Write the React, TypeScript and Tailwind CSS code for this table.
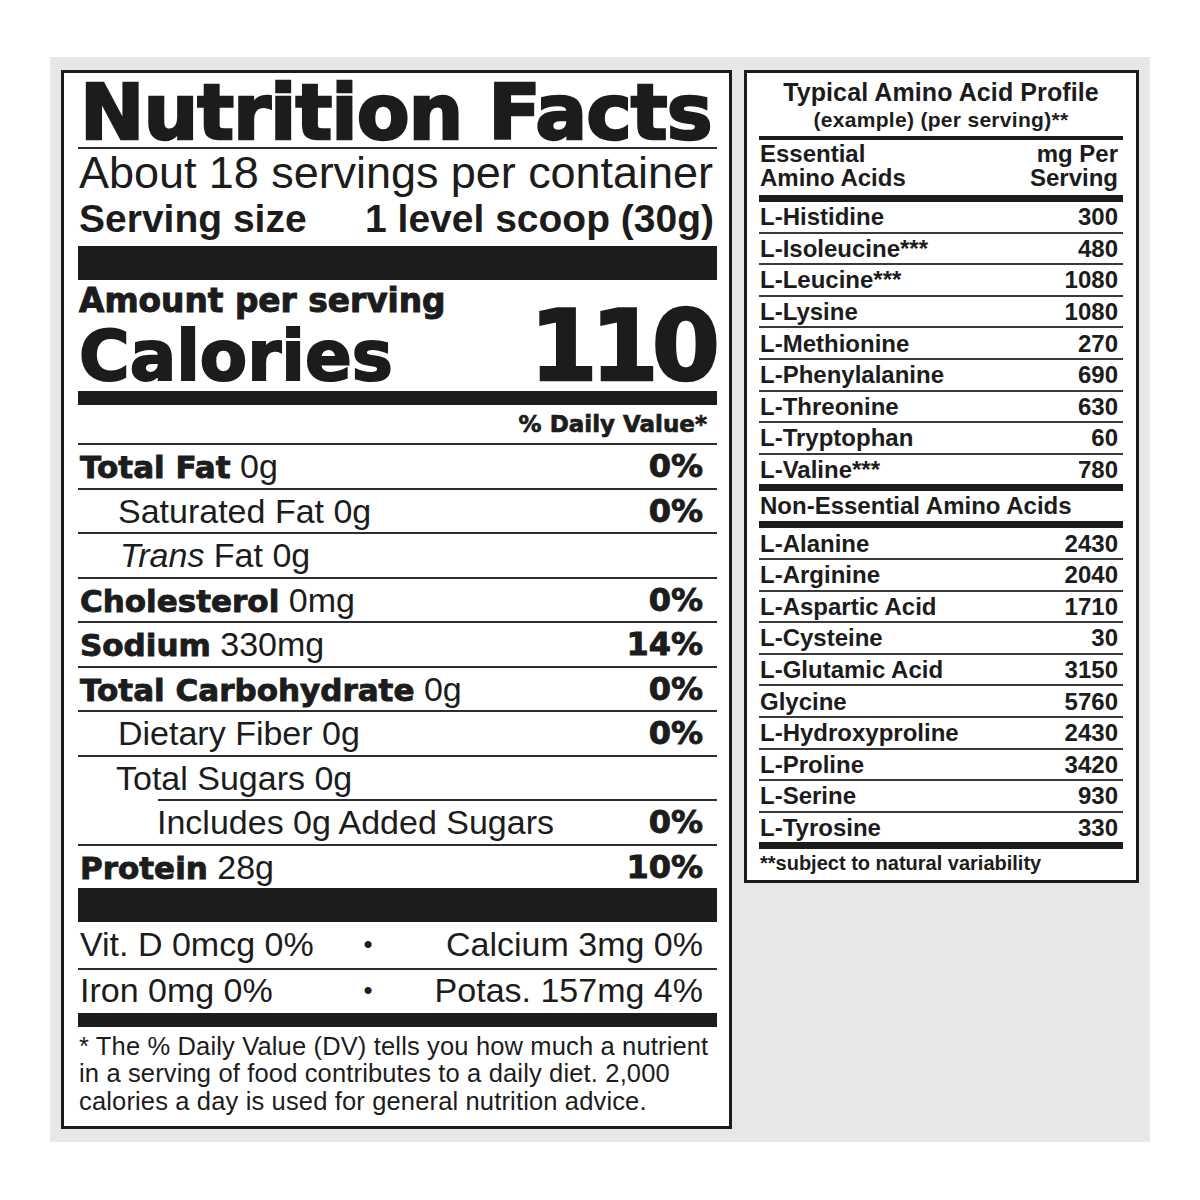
import React from "react";

const HEAVY = "font-['DejaVu_Sans',sans-serif] font-bold";
const REG = "font-['Liberation_Sans',Arial,sans-serif]";

type Nut = {
  bold?: string;
  reg: React.ReactNode;
  pct?: string;
  indent: string;
  line: string;
};

const nutrients: Nut[] = [
  { bold: "Total Fat", reg: " 0g", pct: "0%", indent: "pl-[2px]", line: "h-[2px] bg-[#2e2e2e]" },
  { reg: "Saturated Fat 0g", pct: "0%", indent: "pl-[40px]", line: "h-[2px] bg-[#2e2e2e]" },
  { reg: (<><i>Trans</i> Fat 0g</>), indent: "pl-[42px]", line: "h-[2px] bg-[#2e2e2e]" },
  { bold: "Cholesterol", reg: " 0mg", pct: "0%", indent: "pl-[2px]", line: "h-[2px] bg-[#2e2e2e]" },
  { bold: "Sodium", reg: " 330mg", pct: "14%", indent: "pl-[2px]", line: "h-[2px] bg-[#2e2e2e]" },
  { bold: "Total Carbohydrate", reg: " 0g", pct: "0%", indent: "pl-[2px]", line: "h-[2px] bg-[#2e2e2e]" },
  { reg: "Dietary Fiber 0g", pct: "0%", indent: "pl-[40px]", line: "h-[2px] bg-[#2e2e2e]" },
  { reg: "Total Sugars 0g", indent: "pl-[38px]", line: "h-[2px] bg-[#2e2e2e]" },
  { reg: "Includes 0g Added Sugars", pct: "0%", indent: "pl-[79px]", line: "h-[2px] bg-[#2e2e2e] ml-[80px]" },
  { bold: "Protein", reg: " 28g", pct: "10%", indent: "pl-[2px]", line: "h-[2px] bg-[#2e2e2e]" },
];

const essential: [string, string][] = [
  ["L-Histidine", "300"],
  ["L-Isoleucine***", "480"],
  ["L-Leucine***", "1080"],
  ["L-Lysine", "1080"],
  ["L-Methionine", "270"],
  ["L-Phenylalanine", "690"],
  ["L-Threonine", "630"],
  ["L-Tryptophan", "60"],
  ["L-Valine***", "780"],
];

const nonEssential: [string, string][] = [
  ["L-Alanine", "2430"],
  ["L-Arginine", "2040"],
  ["L-Aspartic Acid", "1710"],
  ["L-Cysteine", "30"],
  ["L-Glutamic Acid", "3150"],
  ["Glycine", "5760"],
  ["L-Hydroxyproline", "2430"],
  ["L-Proline", "3420"],
  ["L-Serine", "930"],
  ["L-Tyrosine", "330"],
];

function NutritionPanel() {
  return (
    <div className="w-[671px] h-[1059px] shrink-0 border-[3px] border-[#1c1c1c] bg-white pl-[14px] pr-[12px] text-[#1c1c1c]">
      {/* Title */}
      <div className="pt-[5px]">
        <div className={`${HEAVY} text-[77px] leading-[69px] tracking-[-1px] whitespace-nowrap pl-[2px] [-webkit-text-stroke:2.5px_#1c1c1c]`}>
          Nutrition Facts
        </div>
      </div>
      <div className="h-[2px] bg-[#2e2e2e]" />
      <div className={`${REG} mt-[1px] text-[45px] leading-[45px] tracking-[-0.05px] whitespace-nowrap pl-[1px]`}>
        About 18 servings per container
      </div>
      <div className={`${REG} font-bold mt-[4px] text-[39px] leading-[39px] flex justify-between whitespace-nowrap pl-[1px] pr-[3px]`}>
        <span>Serving size</span>
        <span>1 level scoop (30g)</span>
      </div>
      <div className="mt-[8px] h-[34px] bg-[#1c1c1c]" />
      {/* Calories */}
      <div className="flex justify-between items-end pt-[5px]">
        <div className="pl-[1px]">
          <div className={`${HEAVY} text-[32.8px] leading-[33px] whitespace-nowrap [-webkit-text-stroke:1px_#1c1c1c]`}>Amount per serving</div>
          <div className={`${HEAVY} mt-[3px] text-[69px] leading-[70px] whitespace-nowrap [-webkit-text-stroke:2px_#1c1c1c]`}>Calories</div>
        </div>
        <div className={`${HEAVY} text-[98px] leading-[86px] tracking-[-7px] mb-[2px] mr-[4px] whitespace-nowrap [-webkit-text-stroke:2.5px_#1c1c1c]`}>110</div>
      </div>
      <div className="h-[14px] bg-[#1c1c1c]" />
      <div className={`${HEAVY} h-[38px] text-[23px] leading-[38px] text-right pr-[10px] whitespace-nowrap [-webkit-text-stroke:0.7px_#1c1c1c]`}>
        % Daily Value*
      </div>
      {nutrients.map((n, i) => (
        <div key={i} className="h-[44.5px] flex flex-col">
          <div className={n.line} />
          <div className={`flex-1 flex items-center justify-between ${n.indent} pr-[14px] whitespace-nowrap`}>
            <div className="leading-none">
              {n.bold && <span className={`${HEAVY} text-[31px] [-webkit-text-stroke:0.9px_#1c1c1c]`}>{n.bold}</span>}
              <span className={`${REG} text-[34px]`}>{n.reg}</span>
            </div>
            {n.pct && <span className={`${HEAVY} text-[32px] leading-none [-webkit-text-stroke:0.9px_#1c1c1c]`}>{n.pct}</span>}
          </div>
        </div>
      ))}
      <div className="h-[34px] bg-[#1c1c1c]" />
      <div className={`${REG} h-[46px] pb-[2px] grid grid-cols-[280px_20px_1fr] items-center text-[34px] leading-none whitespace-nowrap pr-[14px]`}>
        <span className="pl-[2px]">Vit. D 0mcg 0%</span>
        <span className="text-center text-[26px]">•</span>
        <span className="text-right">Calcium 3mg 0%</span>
      </div>
      <div className="h-[2px] bg-[#2e2e2e]" />
      <div className={`${REG} h-[43px] pb-[4px] grid grid-cols-[280px_20px_1fr] items-center text-[34px] leading-none whitespace-nowrap pr-[14px]`}>
        <span className="pl-[2px]">Iron 0mg 0%</span>
        <span className="text-center text-[26px]">•</span>
        <span className="text-right">Potas. 157mg 4%</span>
      </div>
      <div className="h-[14px] bg-[#1c1c1c]" />
      <div className={`${REG} pt-[5.5px] text-[25.5px] leading-[27.5px] tracking-[0.15px] whitespace-nowrap pl-[1px]`}>
        <div>* The % Daily Value (DV) tells you how much a nutrient</div>
        <div>in a serving of food contributes to a daily diet. 2,000</div>
        <div>calories a day is used for general nutrition advice.</div>
      </div>
    </div>
  );
}

function AminoRow({ name, val, last }: { name: string; val: string; last: boolean }) {
  return (
    <>
      <div className={`${REG} font-bold h-[29.6px] pt-[1px] flex items-center justify-between text-[24px] leading-none whitespace-nowrap pl-[1px] pr-[5px]`}>
        <span>{name}</span>
        <span>{val}</span>
      </div>
      {!last && <div className="h-[2px] bg-[#3a3a3a]" />}
    </>
  );
}

function AminoPanel() {
  return (
    <div className="w-[395px] h-[813px] shrink-0 border-[3px] border-[#1c1c1c] bg-white pl-[12px] pr-[13px] text-[#1c1c1c]">
      <div className={`${REG} font-bold pt-[6px] text-[25px] leading-[26px] tracking-[0.1px] text-center whitespace-nowrap`}>
        Typical Amino Acid Profile
      </div>
      <div className={`${REG} font-bold mt-[3px] text-[21px] leading-[24px] tracking-[0.3px] text-center whitespace-nowrap`}>
        (example) (per serving)**
      </div>
      <div className="mt-[4px] h-[4px] bg-[#1c1c1c]" />
      <div className={`${REG} font-bold mt-[2px] flex justify-between text-[24px] leading-[24px] whitespace-nowrap pl-[1px] pr-[5px]`}>
        <div className="flex flex-col">
          <span>Essential</span>
          <span>Amino Acids</span>
        </div>
        <div className="flex flex-col items-end">
          <span>mg Per</span>
          <span>Serving</span>
        </div>
      </div>
      <div className="mt-[5px] h-[7px] bg-[#1c1c1c]" />
      {essential.map(([n, v], i) => (
        <AminoRow key={n} name={n} val={v} last={i === essential.length - 1} />
      ))}
      <div className="h-[7px] bg-[#1c1c1c]" />
      <div className={`${REG} font-bold h-[30px] flex items-center text-[24px] leading-none whitespace-nowrap pl-[1px]`}>
        Non-Essential Amino Acids
      </div>
      <div className="h-[7px] bg-[#1c1c1c]" />
      {nonEssential.map(([n, v], i) => (
        <AminoRow key={n} name={n} val={v} last={i === nonEssential.length - 1} />
      ))}
      <div className="h-[7px] bg-[#1c1c1c]" />
      <div className={`${REG} font-bold h-[28px] flex items-center text-[20px] leading-none whitespace-nowrap pl-[1px]`}>
        **subject to natural variability
      </div>
    </div>
  );
}

export default function App() {
  return (
    <div className="w-[1200px] h-[1200px] bg-white pt-[57px] pl-[50px]">
      <div className="w-[1100px] h-[1085px] bg-[#e6e7e8] px-[11px] pt-[13px] flex items-start gap-[12px]">
        <NutritionPanel />
        <AminoPanel />
      </div>
    </div>
  );
}
